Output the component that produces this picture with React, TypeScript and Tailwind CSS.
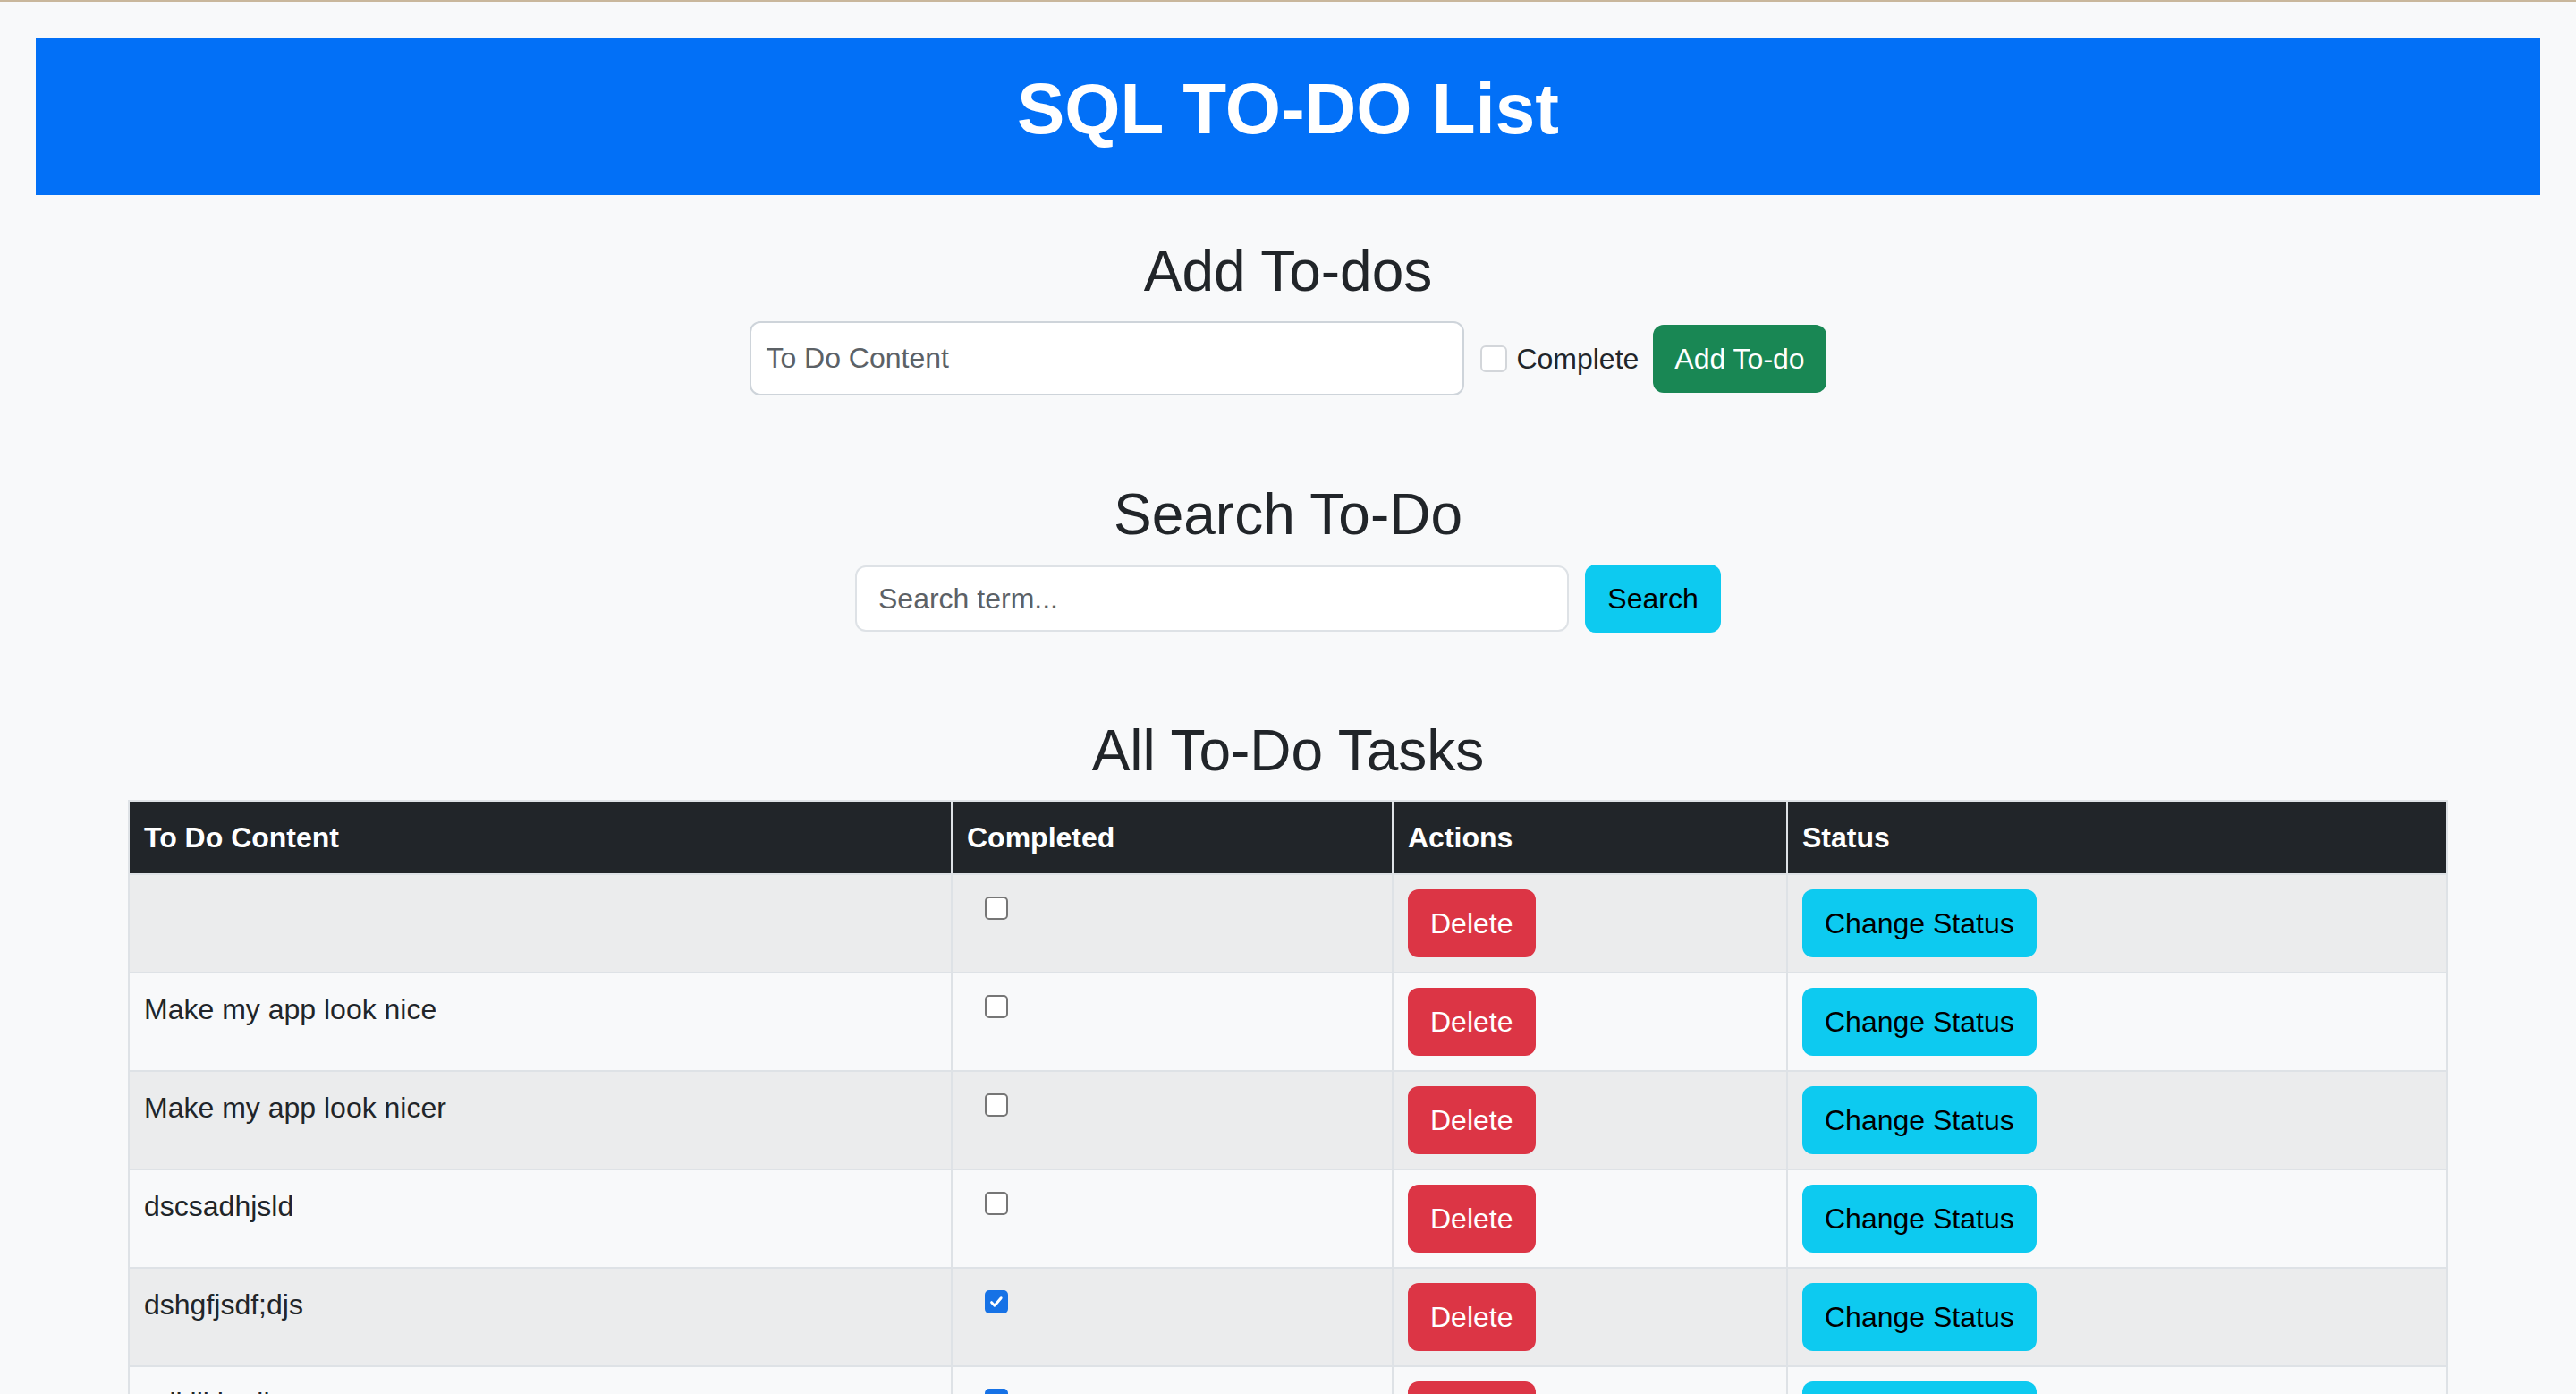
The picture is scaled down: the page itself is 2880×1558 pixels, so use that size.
import React from "react";

type Row = { text: string; done: boolean };

const rows: Row[] = [
  { text: "", done: false },
  { text: "Make my app look nice", done: false },
  { text: "Make my app look nicer", done: false },
  { text: "dscsadhjsld", done: false },
  { text: "dshgfjsdf;djs", done: true },
  { text: "adkjlkhsdj", done: true },
  { text: "test todo", done: false },
];

function Check({ checked }: { checked: boolean }) {
  if (checked) {
    return (
      <span className="inline-flex h-[26px] w-[26px] items-center justify-center rounded-[5px] bg-[#1672e6]">
        <svg width="18" height="18" viewBox="0 0 16 16">
          <path
            d="M3.2 8.6l3 3.2 6.4-7.6"
            fill="none"
            stroke="white"
            strokeWidth="2.6"
            strokeLinecap="round"
            strokeLinejoin="round"
          />
        </svg>
      </span>
    );
  }
  return <span className="inline-block h-[26px] w-[26px] rounded-[5px] border-2 border-[#767676] bg-white" />;
}

export default function App() {
  return (
    <div className="min-h-screen bg-[#f8f9fa] font-['Liberation_Sans',Arial,sans-serif] text-[#212529]">
      <div className="h-[2px] bg-[#c9b79c]" />
      <div className="mx-[40px] mt-[40px] bg-[#0270f7] py-[32px] text-center">
        <h1 className="mb-[16px] text-[80px] font-bold leading-[96px] text-white">SQL TO-DO List</h1>
      </div>

      <h2 className="mt-[47px] text-center text-[64px] font-normal leading-[77px]">Add To-dos</h2>
      <div className="mt-[17px] flex items-center justify-center">
        <input
          placeholder="To Do Content"
          className="h-[83px] w-[799px] rounded-[12px] border-2 border-[#ced4da] bg-white pl-[16px] text-[32px] text-[#212529] outline-none placeholder:text-[#5c6166]"
        />
        <span className="ml-[18px] inline-block h-[30px] w-[30px] rounded-[6px] border-2 border-[#d3d6da] bg-white" />
        <span className="ml-[10px] text-[32px] leading-[48px]">Complete</span>
        <button className="ml-[16px] h-[76px] rounded-[12px] bg-[#198754] px-[24px] text-[32px] leading-[48px] text-white">
          Add To-do
        </button>
      </div>

      <h2 className="mt-[95px] text-center text-[64px] font-normal leading-[77px]">Search To-Do</h2>
      <div className="mt-[17px] flex items-center justify-center">
        <input
          placeholder="Search term..."
          className="h-[74px] w-[798px] rounded-[12px] border-2 border-[#dee2e6] bg-white pl-[24px] text-[32px] text-[#212529] outline-none placeholder:text-[#5c6166]"
        />
        <button className="ml-[18px] h-[76px] w-[152px] rounded-[12px] bg-[#0dcaf0] text-[32px] leading-[48px] text-black">
          Search
        </button>
      </div>

      <h2 className="mt-[94px] text-center text-[64px] font-normal leading-[77px]">All To-Do Tasks</h2>
      <div className="mt-[16px] flex justify-center">
        <table className="w-[2592px] table-fixed border-collapse">
          <colgroup>
            <col className="w-[920px]" />
            <col className="w-[493px]" />
            <col className="w-[441px]" />
            <col className="w-[738px]" />
          </colgroup>
          <thead>
            <tr className="bg-[#212529] text-white">
              {["To Do Content", "Completed", "Actions", "Status"].map((h) => (
                <th
                  key={h}
                  className="border-2 border-[#dee2e6] px-[16px] py-[16px] text-left text-[32px] font-bold leading-[48px]"
                >
                  {h}
                </th>
              ))}
            </tr>
          </thead>
          <tbody>
            {rows.map((r, i) => (
              <tr key={i} className={i % 2 === 0 ? "bg-[#ebeced]" : "bg-[#f8f9fa]"}>
                <td className="border-2 border-[#dee2e6] px-[16px] py-[16px] align-top text-[32px] leading-[48px]">
                  {r.text}
                </td>
                <td className="border-2 border-[#dee2e6] px-[16px] py-[16px] align-top">
                  <div className="pl-[20px] pt-[8px] leading-none">
                    <Check checked={r.done} />
                  </div>
                </td>
                <td className="border-2 border-[#dee2e6] px-[16px] py-[16px] align-top">
                  <button className="h-[76px] rounded-[12px] bg-[#dc3545] px-[25px] text-[32px] leading-[48px] text-white">
                    Delete
                  </button>
                </td>
                <td className="border-2 border-[#dee2e6] px-[16px] py-[16px] align-top">
                  <button className="h-[76px] rounded-[12px] bg-[#0dcaf0] px-[25px] text-[32px] leading-[48px] text-black">
                    Change Status
                  </button>
                </td>
              </tr>
            ))}
          </tbody>
        </table>
      </div>
    </div>
  );
}
